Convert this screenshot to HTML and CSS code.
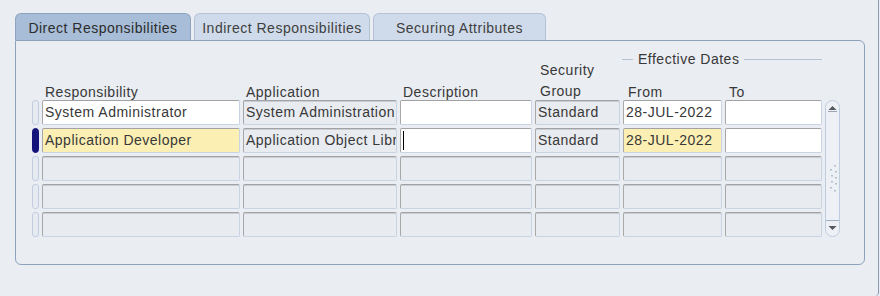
FILE: index.html
```html
<!DOCTYPE html>
<html lang="en">
<head>
  <meta charset="UTF-8" />
  <title>Responsibilities</title>
  <link rel="stylesheet" href="styles.css">
</head>
<body>
  <div class="janela">
    <div class="abas">
      <div class="aba ativa">Direct Responsibilities</div>
      <div class="aba">Indirect Responsibilities</div>
      <div class="aba">Securing Attributes</div>
    </div>

    <div class="painel">
      <div class="cabecalho">
        <div class="grupo">
          <span class="linha curta"></span>
          <span class="titulo">Effective Dates</span>
          <span class="linha"></span>
        </div>
        <div class="rotulo c-resp">Responsibility</div>
        <div class="rotulo c-app">Application</div>
        <div class="rotulo c-desc">Description</div>
        <div class="rotulo c-sec duas">Security<br>Group</div>
        <div class="rotulo c-de">From</div>
        <div class="rotulo c-ate">To</div>
      </div>

      <div class="grade">
        <!-- linha 1 -->
        <div class="ind"></div>
        <div class="campo branco">System Administrator</div>
        <div class="campo">System Administration</div>
        <div class="campo branco"></div>
        <div class="campo">Standard</div>
        <div class="campo branco">28-JUL-2022</div>
        <div class="campo branco"></div>

        <div class="rolagem">
          <svg class="seta" width="15" height="16" viewBox="0 0 15 16">
            <polygon points="3.5,9 11.5,9 7.5,5" fill="#55585e"/>
            <line x1="3" y1="10.5" x2="12" y2="10.5" stroke="#9aa6b6" stroke-width="1"/>
          </svg>
          <svg class="pega" width="15" height="32" viewBox="0 0 15 32">
            <g fill="#b2bdcc">
              <rect x="9" y="2" width="2" height="1.5"/>
              <rect x="5" y="6" width="2" height="1.5"/>
              <rect x="10" y="8" width="2" height="1.5"/>
              <rect x="6" y="12" width="2" height="1.5"/>
              <rect x="10" y="14" width="2" height="1.5"/>
              <rect x="6" y="18" width="2" height="1.5"/>
              <rect x="10" y="20" width="2" height="1.5"/>
              <rect x="5" y="24" width="2" height="1.5"/>
              <rect x="9" y="27" width="2" height="1.5"/>
            </g>
          </svg>
          <svg class="seta baixo" width="15" height="16" viewBox="0 0 15 16">
            <line x1="0" y1="0.5" x2="15" y2="0.5" stroke="#9fb0c6" stroke-width="1"/>
            <polygon points="3.5,6 11.5,6 7.5,10" fill="#55585e"/>
          </svg>
        </div>

        <!-- linha 2 (registro atual) -->
        <div class="ind atual"></div>
        <div class="campo amarelo">Application Developer</div>
        <div class="campo">Application Object Library</div>
        <div class="campo branco"><span class="cursor"></span></div>
        <div class="campo">Standard</div>
        <div class="campo amarelo">28-JUL-2022</div>
        <div class="campo branco"></div>

        <!-- linhas vazias -->
        <div class="ind"></div>
        <div class="campo"></div><div class="campo"></div><div class="campo"></div>
        <div class="campo"></div><div class="campo"></div><div class="campo"></div>

        <div class="ind"></div>
        <div class="campo"></div><div class="campo"></div><div class="campo"></div>
        <div class="campo"></div><div class="campo"></div><div class="campo"></div>

        <div class="ind"></div>
        <div class="campo"></div><div class="campo"></div><div class="campo"></div>
        <div class="campo"></div><div class="campo"></div><div class="campo"></div>
      </div>
    </div>
  </div>
</body>
</html>
```

FILE: styles.css
```css
body {
  margin: 0;
  padding: 0;
  background-color: #eaedf2;
  font-family: "Liberation Sans", Arial, sans-serif;
  font-size: 14px;
  letter-spacing: 0.5px;
  color: #383838;
}

.janela {
  width: 879px;
  height: 296px;
  border-right: 1px solid #8a9bb4;
  border-bottom-right-radius: 4px;
  box-sizing: border-box;
  padding-top: 13px;
}

/* abas */
.abas {
  display: flex;
  gap: 3px;
  padding-left: 15px;
  height: 27px;
}

.aba {
  height: 27px;
  box-sizing: border-box;
  border: 1px solid #b3c2d6;
  border-bottom: none;
  border-radius: 6px 6px 0 0;
  background-color: #cfdbea;
  color: #404040;
  display: flex;
  align-items: center;
  justify-content: center;
  padding-top: 1px;
  width: 176px;
}

.aba.ativa {
  background-color: #a8bdd7;
  border-color: #8ea3bf;
  color: #2c2c2c;
}

.aba:nth-child(3) {
  width: 173px;
}

/* painel */
.painel {
  margin-left: 15px;
  width: 850px;
  height: 225px;
  box-sizing: border-box;
  border: 1px solid #8fa2bd;
  border-radius: 0 6px 6px 6px;
  padding-left: 16px;
}

.cabecalho,
.grade {
  display: grid;
  grid-template-columns: 7px 198px 154px 132px 85px 99px 97px 15px;
  column-gap: 3px;
}

.cabecalho {
  height: 59px;
  grid-template-rows: 26px 1fr;
}

.grupo {
  grid-column: 6 / 8;
  grid-row: 1;
  display: flex;
  align-items: center;
  gap: 5px;
  padding-top: 10px;
  margin-left: -1px;
  line-height: 14px;
}

.titulo {
  white-space: nowrap;
}

.linha {
  flex: 1 1 auto;
  height: 1px;
  background-color: #b4c2d6;
}

.linha.curta {
  flex: 0 0 11px;
}

.rotulo {
  grid-row: 2;
  align-self: end;
  line-height: 18px;
  margin-bottom: -1px;
  padding-left: 3px;
  white-space: nowrap;
}

.c-resp { grid-column: 2; }
.c-app { grid-column: 3; }
.c-desc { grid-column: 4; }
.c-sec { grid-column: 5; grid-row: 1 / 3; padding-left: 5px; }
.c-de { grid-column: 6; padding-left: 5px; }
.c-ate { grid-column: 7; padding-left: 4px; }

.rotulo.duas {
  line-height: 21px;
  margin-bottom: -2px;
}

/* grade de registros */
.grade {
  grid-auto-rows: 25px;
  row-gap: 3px;
}

.ind {
  grid-column: 1;
  border: 1px solid #c2cee0;
  border-radius: 3px;
  background-color: #e6ebf2;
}

.ind.atual {
  background-color: #13137a;
  border-color: #13137a;
  border-radius: 4px;
}

.campo {
  box-sizing: border-box;
  border-top: 1px solid #a2a2a2;
  border-left: 1px solid #a8a8a8;
  border-bottom: 1px solid #c8d4e4;
  border-right: 1px solid #c8d4e4;
  border-radius: 2px;
  box-shadow: inset 0 1px 0 #c9ced6;
  background-color: #e8ebf0;
  padding-left: 2px;
  line-height: 23px;
  white-space: nowrap;
  overflow: hidden;
}

.campo.branco {
  background-color: #ffffff;
  box-shadow: none;
}

.campo.amarelo {
  background-color: #fcefb3;
  box-shadow: none;
}

.cursor {
  display: inline-block;
  width: 1px;
  height: 19px;
  margin-top: 2px;
  vertical-align: top;
  background-color: #000;
}

.rolagem {
  grid-column: 8;
  grid-row: 1 / 6;
  box-sizing: border-box;
  border: 1px solid #bfcce0;
  border-radius: 8px;
  background-color: #edf0f4;
  display: flex;
  flex-direction: column;
  justify-content: space-between;
  align-items: center;
  overflow: hidden;
}

.seta {
  display: block;
  margin-left: -1px;
}

.pega {
  display: block;
  margin-left: -1px;
  margin-top: 20px;
}
```
